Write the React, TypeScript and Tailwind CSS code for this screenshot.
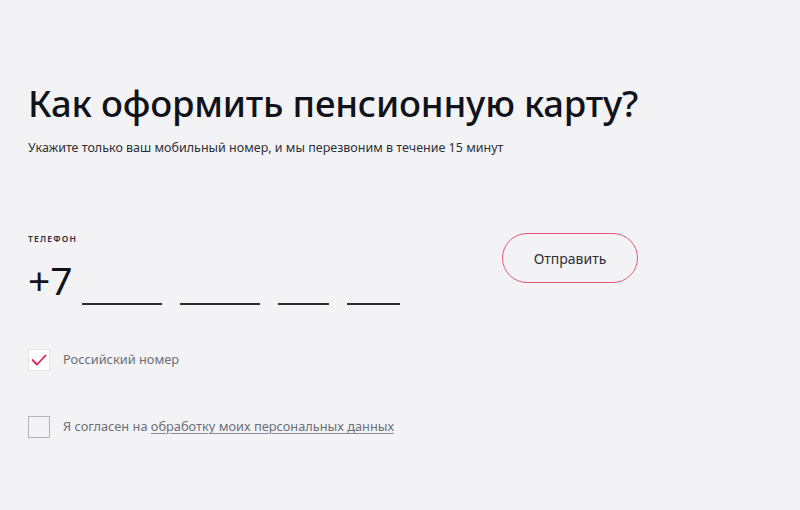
import React from "react";

const font = { fontFamily: '"Noto Sans", "Open Sans", sans-serif' };

function Blank({ w }: { w: string }) {
  return <span className={`block h-[2px] bg-[#2a2e39] ${w}`} />;
}

export default function App() {
  return (
    <div
      className="w-[800px] h-[510px] bg-[#f3f3f5] pl-[28px] pt-[79px] text-[#11131a] overflow-hidden"
      style={font}
    >
      <h1 className="text-[36.5px] leading-[48px] font-medium tracking-[-0.2px]">
        Как оформить пенсионную карту?
      </h1>
      <p className="mt-[13px] text-[12.5px] leading-[16px] text-[#2c2f38]">
        Укажите только ваш мобильный номер, и мы перезвоним в течение 15 минут
      </p>

      <div className="mt-[77px] flex items-start">
        <div className="w-[474px]">
          <div className="text-[8.5px] leading-[12px] font-semibold tracking-[1.2px] text-[#2c2f38]">
            ТЕЛЕФОН
          </div>
          <div className="mt-[15px] flex items-end">
            <span className="text-[39px] leading-[40px] font-normal">+7</span>
            <div className="ml-[9px] mb-[-5px] flex gap-[18px]">
              <Blank w="w-[80px]" />
              <Blank w="w-[80px]" />
              <Blank w="w-[51px]" />
              <Blank w="w-[53px]" />
            </div>
          </div>
        </div>
        <button
          type="button"
          className="w-[136px] h-[50px] rounded-full border-[1.5px] border-[#e8577a] text-[14px] text-[#2c2f38]"
        >
          Отправить
        </button>
      </div>

      <div className="mt-[49px] flex items-center gap-[13px]">
        <span className="w-[22px] h-[22px] bg-white border border-[#e4e5ea] flex items-center justify-center">
          <svg width="16" height="12" viewBox="0 0 16 12" fill="none">
            <path d="M1.5 6 L6 10.5 L14.5 1.5" stroke="#e3204f" strokeWidth="1.8" strokeLinecap="round" strokeLinejoin="round" />
          </svg>
        </span>
        <span className="text-[12.8px] text-[#6b6e78]">Российский номер</span>
      </div>

      <div className="mt-[45px] flex items-center gap-[13px]">
        <span className="w-[22px] h-[22px] border border-[#b3b5bd]" />
        <span className="text-[12.8px] text-[#6b6e78]">
          Я согласен на{" "}
          <span className="underline decoration-[#8a8d96] underline-offset-2">
            обработку моих персональных данных
          </span>
        </span>
      </div>
    </div>
  );
}
